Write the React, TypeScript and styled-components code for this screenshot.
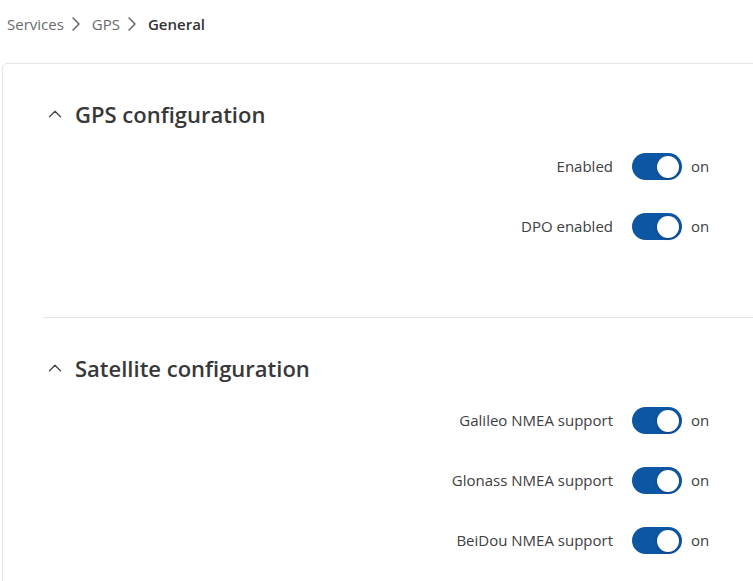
import React from 'react';
import styled, { createGlobalStyle } from 'styled-components';
import { ChevronRight, ChevronUp } from 'lucide-react';

const GlobalStyle = createGlobalStyle`
  html, body {
    margin: 0;
    padding: 0;
    background: #fff;
    overflow: hidden;
  }
  body {
    font-family: "Open Sans", "Noto Sans", sans-serif;
    color: #404040;
  }
`;

const Page = styled.div`
  width: 753px;
  height: 581px;
  overflow: hidden;
`;

const Breadcrumbs = styled.nav`
  display: flex;
  align-items: center;
  height: 48px;
  padding-left: 7px;
  font-size: 15px;
`;

const Crumb = styled.span<{ $current?: boolean }>`
  color: ${({ $current }) => ($current ? '#333' : '#6b6b6b')};
  font-weight: ${({ $current }) => ($current ? 600 : 400)};
`;

const Sep = styled.span`
  display: flex;
  color: #555;
  margin: 0 4px 0 0;
`;

const Card = styled.div`
  margin-top: 15px;
  margin-left: 2px;
  width: 820px;
  border: 1px solid #e6e6e6;
  border-radius: 5px;
  background: #fff;
  padding-left: 40px;
`;

const Section = styled.section<{ $last?: boolean }>`
  padding: 35px 0 ${({ $last }) => ($last ? '40px' : '71px')};
  border-bottom: ${({ $last }) => ($last ? 'none' : '1px solid #e6e6e6')};
`;

const SectionHeader = styled.div`
  display: flex;
  align-items: center;
  height: 30px;
  gap: 9px;
  padding-left: 1px;
`;

const Chevron = styled.span`
  display: flex;
  color: #444;
`;

const Title = styled.h2`
  margin: 0;
  font-size: 22px;
  font-weight: 600;
  color: #383838;
  line-height: 30px;
`;

const Rows = styled.div`
  display: flex;
  flex-direction: column;
  gap: 20px;
  margin-top: 17px;
`;

const Row = styled.div`
  display: grid;
  grid-template-columns: 570px 50px auto;
  column-gap: 19px;
  align-items: center;
  height: 40px;
  font-size: 15px;
`;

const Label = styled.span`
  text-align: right;
  color: #404040;
`;

const Track = styled.span<{ $on: boolean }>`
  position: relative;
  display: block;
  width: 50px;
  height: 27px;
  border-radius: 14px;
  background: ${({ $on }) => ($on ? '#0d56a4' : '#cfcfcf')};
`;

const Knob = styled.span<{ $on: boolean }>`
  position: absolute;
  top: 3px;
  left: ${({ $on }) => ($on ? '25px' : '3px')};
  width: 22px;
  height: 22px;
  border-radius: 50%;
  background: #fff;
  box-shadow: 0 1px 3px rgba(0, 0, 0, 0.25);
`;

const State = styled.span`
  margin-left: -10px;
  color: #404040;
`;

type Field = { label: string; on: boolean };

const sections: { title: string; fields: Field[] }[] = [
  {
    title: 'GPS configuration',
    fields: [
      { label: 'Enabled', on: true },
      { label: 'DPO enabled', on: true },
    ],
  },
  {
    title: 'Satellite configuration',
    fields: [
      { label: 'Galileo NMEA support', on: true },
      { label: 'Glonass NMEA support', on: true },
      { label: 'BeiDou NMEA support', on: true },
    ],
  },
];

const Toggle: React.FC<{ on: boolean }> = ({ on }) => (
  <Track $on={on}>
    <Knob $on={on} />
  </Track>
);

const App: React.FC = () => (
  <Page>
    <GlobalStyle />
    <Breadcrumbs>
      <Crumb>Services</Crumb>
      <Sep><ChevronRight size={24} strokeWidth={1.3} /></Sep>
      <Crumb>GPS</Crumb>
      <Sep><ChevronRight size={24} strokeWidth={1.3} /></Sep>
      <Crumb $current>General</Crumb>
    </Breadcrumbs>
    <Card>
      {sections.map((s, i) => (
        <Section key={s.title} $last={i === sections.length - 1}>
          <SectionHeader>
            <Chevron><ChevronUp size={22} strokeWidth={1.4} /></Chevron>
            <Title>{s.title}</Title>
          </SectionHeader>
          <Rows>
            {s.fields.map((f) => (
              <Row key={f.label}>
                <Label>{f.label}</Label>
                <Toggle on={f.on} />
                <State>{f.on ? 'on' : 'off'}</State>
              </Row>
            ))}
          </Rows>
        </Section>
      ))}
    </Card>
  </Page>
);

export default App;
